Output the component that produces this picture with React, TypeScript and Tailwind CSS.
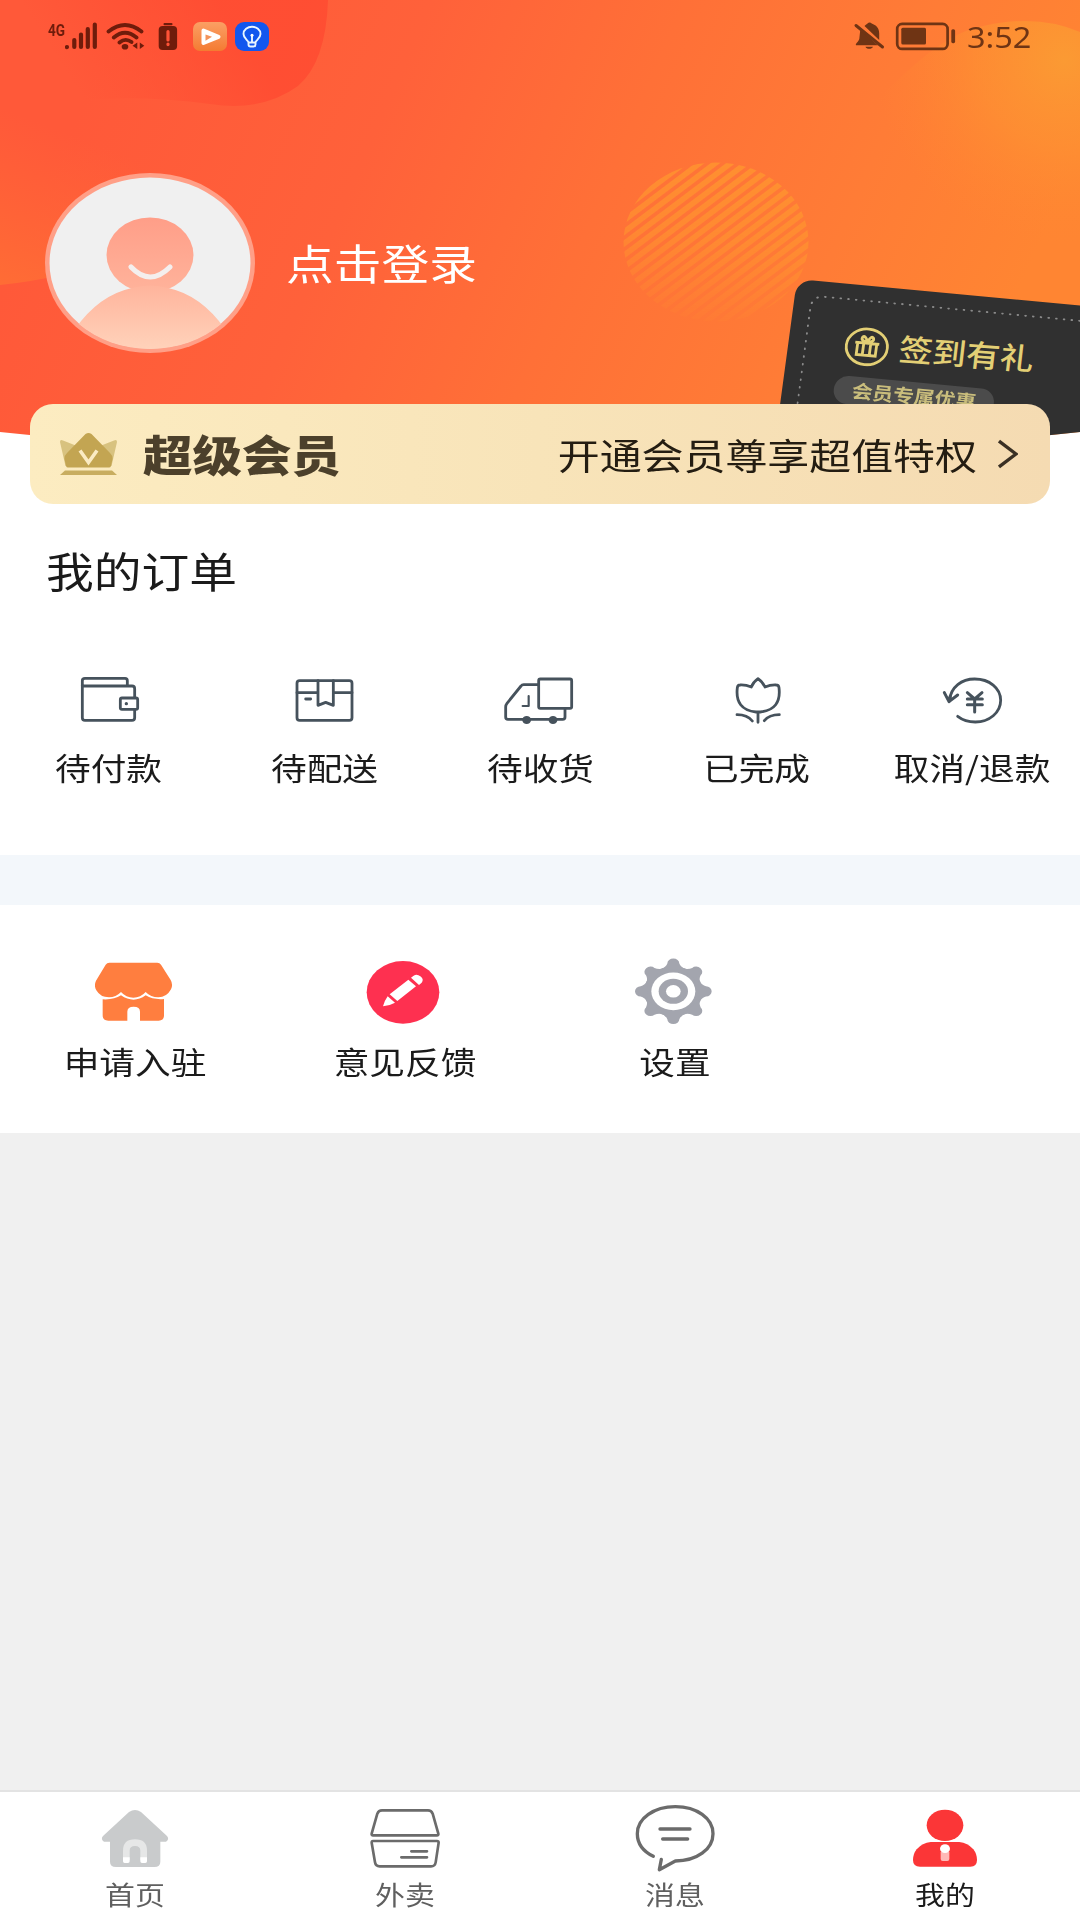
import React from 'react';

type IconItem = { id: string; label: string; icon: React.ReactNode };

const INK = '#46525c';

/* ---------- status bar ---------- */

function StatusLeft() {
  return (
    <div className="flex items-start h-[34px] text-[#6f1c0b]">
      <span className="block w-[17px] mt-px text-[17px] leading-[17px] font-bold font-[Roboto,sans-serif] origin-left scale-x-[0.8] whitespace-nowrap">4G</span>
      <svg className="w-[32px] h-[30px]" viewBox="65 21 32 30" fill="none" stroke="currentColor" strokeWidth="4.2" strokeLinecap="round">
        <path d="M67 47v.1M74.3 40v7M81 34.5v12.5M87.8 29v18M94.8 24.5v22.5" />
      </svg>
      <svg className="w-[40px] h-[30px] ml-[8px]" viewBox="105 21 40 30" fill="none" stroke="currentColor" strokeWidth="3.8" strokeLinecap="round">
        <path d="M108.500 31.500Q125 18.500 141.500 31.500M113.800 37.500Q125 28 136.500 37.500M119.500 42.500Q125.500 37.500 131.500 42" />
        <ellipse cx="125" cy="46.700" rx="3.300" ry="2.800" fill="currentColor" stroke="none" />
        <path d="M137.300 42.500v6.500L132.500 45.700zM139.800 42.500v6.500l4.500-3.300z" fill="currentColor" stroke="none" />
      </svg>
      <svg className="w-[20px] h-[30px] ml-[13px]" viewBox="158 21 20 30">
        <rect x="163.500" y="23" width="9" height="2.200" rx="1" fill="currentColor" />
        <rect x="158.700" y="26" width="18.400" height="24" rx="4" fill="currentColor" />
        <path d="M168 31.500v8.500M168 44v.6" stroke="#ff5337" strokeWidth="3.200" strokeLinecap="round" />
      </svg>
      <div className="w-[34px] h-[29px] ml-[15px] mt-px rounded-[7px] bg-gradient-to-b from-[#fb9f63] to-[#f47b31]">
        <svg className="w-[34px] h-[29px]" viewBox="0 0 34 29" fill="none" stroke="#fff" strokeLinejoin="round">
          <path d="M10.500 8.500l15 6.300-15 6.200z" fill="#fff" strokeWidth="4" />
          <path d="M12.500 12.500l6.500 2.300-6.500 4z" fill="#f4935a" stroke="none" />
        </svg>
      </div>
      <div className="w-[34px] h-[29px] ml-[8px] mt-px rounded-[9px] bg-[#1257ee]">
        <svg className="w-[34px] h-[29px]" viewBox="0 0 34 29" fill="none" stroke="#e9f6ff" strokeWidth="1.900" strokeLinecap="round">
          <path d="M13.500 20.500c-.3-2.200-5-4-5-8.500 0-4.300 4-7.200 8.500-7.200s8.500 2.900 8.500 7.200c0 4.500-4.700 6.300-5 8.500zM13.500 20.500v2q0 2 2 2h3q2 0 2-2v-2M17 13v6.500" />
          <circle cx="17" cy="13.300" r="1.500" fill="#fff" stroke="none" />
        </svg>
      </div>
    </div>
  );
}

function StatusRight() {
  return (
    <div className="flex items-start h-[34px] text-[#6f3414]">
      <svg className="w-[32px] h-[30px]" viewBox="853 21 32 30" fill="currentColor">
        <path d="M864.500 26c1-1.500 2.500-2 3-2.600 1.200-1.300 3-1.300 4.200 0 4.300 1.500 7.500 4.500 7.500 10v6.500zM860.300 29.500l17.500 15.800H856c-1-1.800 2.800-3.400 3.300-6.500zM865.500 46.800h7.400c-.8 2.700-6.600 2.700-7.400 0z" />
        <path d="M856 25.500l26.500 21.500" stroke="currentColor" strokeWidth="3" strokeLinecap="round" />
      </svg>
      <svg className="w-[62px] h-[30px] ml-[10px]" viewBox="895 21 62 30">
        <rect x="897.200" y="23.900" width="50.400" height="25" rx="5" fill="none" stroke="currentColor" strokeWidth="2.700" />
        <rect x="901.300" y="27.800" width="24.700" height="16.800" rx="1.500" fill="currentColor" />
        <rect x="951.300" y="29.200" width="3.800" height="14" rx="1.600" fill="currentColor" />
      </svg>
      <span className="block w-[64px] ml-[10px] text-[29px] leading-[32px] font-['Noto_Sans',sans-serif] origin-left scale-x-[1.12] whitespace-nowrap">3:52</span>
    </div>
  );
}

/* ---------- header ---------- */

function HeaderBackdrop() {
  return (
    <svg className="absolute inset-0 w-[1080px] h-[461px]" viewBox="0 0 1080 461">
      <defs>
        <linearGradient id="sky" gradientUnits="userSpaceOnUse" x1="100" y1="60" x2="960" y2="430">
          <stop offset="0" stopColor="#ff5939" />
          <stop offset="0.3" stopColor="#ff613a" />
          <stop offset="0.55" stopColor="#ff7037" />
          <stop offset="0.8" stopColor="#ff7c36" />
          <stop offset="1" stopColor="#ff8532" />
        </linearGradient>
        <linearGradient id="blobFade" gradientUnits="userSpaceOnUse" x1="230" y1="20" x2="90" y2="110">
          <stop offset="0" stopColor="#ff4a31" />
          <stop offset="1" stopColor="#ff4a31" stopOpacity="0" />
        </linearGradient>
        <linearGradient id="wave" gradientUnits="userSpaceOnUse" x1="0" y1="286" x2="60" y2="130">
          <stop offset="0" stopColor="#ff7034" stopOpacity="0.85" />
          <stop offset="1" stopColor="#ff6a36" stopOpacity="0" />
        </linearGradient>
        <radialGradient id="sun" gradientUnits="userSpaceOnUse" cx="1065" cy="60" r="190">
          <stop offset="0" stopColor="#fb9a33" />
          <stop offset="0.45" stopColor="#fd9432" stopOpacity="0.6" />
          <stop offset="1" stopColor="#ff8531" stopOpacity="0" />
        </radialGradient>
        <linearGradient id="discFade" x1="0.6" y1="0" x2="0.45" y2="1">
          <stop offset="0" stopColor="#fff" />
          <stop offset="0.5" stopColor="#fff" stopOpacity="0.75" />
          <stop offset="1" stopColor="#fff" stopOpacity="0.1" />
        </linearGradient>
        <mask id="disc">
          <ellipse cx="716" cy="242" rx="92.500" ry="79.500" fill="url(#discFade)" />
        </mask>
        <pattern id="stripes" width="20" height="9.300" patternUnits="userSpaceOnUse" patternTransform="rotate(-37)">
          <rect width="20" height="5.600" fill="#ff962f" />
        </pattern>
      </defs>
      <rect width="1080" height="461" fill="url(#sky)" />
      <path d="M0 0H328Q326 62 298 86Q262 112 210 104Q110 90 0 110Z" fill="url(#blobFade)" opacity="0.8" />
      <path d="M0 60V285Q70 278 140 250V60Z" fill="url(#wave)" />
      <path d="M860 120Q930 40 975 28Q1035 12 1080 32V330H860Z" fill="url(#sun)" />
      <rect x="620" y="160" width="192" height="164" fill="url(#stripes)" mask="url(#disc)" opacity="0.8" />
    </svg>
  );
}

function Avatar() {
  return (
    <svg className="w-[210px] h-[180px] shrink-0" viewBox="0 0 210 180">
      <defs>
        <linearGradient id="skin" x1="0" y1="0" x2="0" y2="1">
          <stop offset="0" stopColor="#ff9e88" />
          <stop offset="1" stopColor="#ffb39b" />
        </linearGradient>
        <linearGradient id="shirt" gradientUnits="userSpaceOnUse" x1="0" y1="110" x2="0" y2="176">
          <stop offset="0" stopColor="#ffb39b" />
          <stop offset="1" stopColor="#ffd2ba" />
        </linearGradient>
        <clipPath id="face">
          <ellipse cx="105" cy="90" rx="101" ry="86" />
        </clipPath>
      </defs>
      <ellipse cx="105" cy="90" rx="105" ry="90" fill="#ff9f87" />
      <ellipse cx="105" cy="90" rx="100.500" ry="85.500" fill="#f0f0f0" />
      <g clipPath="url(#face)">
        <ellipse cx="105" cy="82" rx="43.500" ry="37.500" fill="url(#skin)" />
        <path d="M30 156Q54 122 87 115Q105 110 123 115Q156 122 180 156V180H30Z" fill="url(#shirt)" />
      </g>
      <path d="M86 94Q105 114 125 94" fill="none" stroke="#f4efee" strokeWidth="5.200" strokeLinecap="round" />
    </svg>
  );
}

function CheckInCard() {
  return (
    <div className="absolute left-[797px] top-[279px] w-[320px] h-[190px] rounded-[16px] bg-[#303030] pt-[40px] pl-[51px] origin-top-left [transform:matrix(1,0.094,-0.135,1,0,0)]">
      <svg className="absolute left-[16px] top-[14px] w-[300px] h-[170px]" viewBox="0 0 300 170" fill="none">
        <path d="M1 170V14Q1 1 14 1H300" stroke="#8a8a8a" strokeWidth="2" strokeLinecap="round" strokeDasharray="0.5 7.200" />
      </svg>
      <div className="flex items-center h-[40px] pl-[5px] text-[#e3cf75]">
        <svg className="w-[44px] h-[39px]" viewBox="0 0 44 39" fill="none" stroke="currentColor" strokeWidth="2.800">
          <ellipse cx="22" cy="19.500" rx="20.500" ry="17.800" />
          <path d="M10 16h24M12.500 16v12h19V16M18.500 16v12M25.500 16v12M22 15q-7-1-5.500-4.500Q19 7.500 22 14.500Q25 7.500 27.500 10.500Q29 14 22 15" />
        </svg>
        <span className="ml-[10px] -mt-[5px] text-[30px] leading-[40px] font-medium whitespace-nowrap origin-left scale-x-[1.12] -rotate-1">签到有礼</span>
      </div>
      <div className="w-[160px] h-[28px] mt-[11px] rounded-[14px] bg-[#4b4b4b] text-[#c9bd7c] pl-[18px]">
        <span className="block text-[18.500px] leading-[26px] font-bold whitespace-nowrap origin-left scale-x-[1.12]">会员专属优惠</span>
      </div>
    </div>
  );
}

function Crown() {
  return (
    <svg className="w-[57px] h-[42px]" viewBox="0 0 57 42">
      <path d="M0 9Q0 6 3 7.500L17 13L28 20L40 13L54 7.500Q57 6 57 9L51.500 33H5.500Z" fill="#d8c27f" />
      <path d="M25.500 1Q28.500-1 31.500 1L50 20Q53 23 52.500 26L51 33Q50.500 34.500 49 34.500H8Q6.500 34.500 6 33L4.500 26Q4 23 7 20Z" fill="#c3a552" />
      <path d="M5 37.500h47l5 4.500H0z" fill="#c8ad60" />
      <path d="M20 17.500l8.500 12 8.500-12" fill="none" stroke="#fbebc3" strokeWidth="3.600" />
    </svg>
  );
}

/* ---------- grid icons ---------- */

const lineProps = { fill: 'none', stroke: INK, strokeWidth: 8.4, strokeLinecap: 'round', strokeLinejoin: 'round' } as const;

const orders: IconItem[] = [
  {
    id: 'pay',
    label: '待付款',
    icon: (
      <svg className="w-[80px] h-[60px]" viewBox="84 60 240 180" {...lineProps}>
        <path d="M127 108V92q0-7 8-7H255q7 0 7 7v14" />
        <path d="M127 106v97q0 8 8 8H276q8 0 8-8V180M284 143V116q0-8-8-8H127" />
        <rect x="241" y="144" width="52" height="34" rx="5" />
        <circle cx="259" cy="161" r="3" fill={INK} strokeWidth="4" />
      </svg>
    ),
  },
  {
    id: 'deliver',
    label: '待配送',
    icon: (
      <svg className="w-[80px] h-[60px]" viewBox="732 60 240 180" {...lineProps}>
        <rect x="771" y="92" width="165" height="119" rx="8" />
        <path d="M771 128h63M880 128h56M834 92v74l23-9 23 9V92M797 147h15" />
      </svg>
    ),
  },
  {
    id: 'receive',
    label: '待收货',
    icon: (
      <svg className="w-[80px] h-[60px]" viewBox="120 60 240 180" {...lineProps}>
        <path d="M234 104h-43q-5 0-8 4l-42 52q-4 5-4 11v30q0 7 7 7H308q7 0 7-7V178" />
        <rect x="236" y="87" width="99" height="88" rx="5" />
        <path d="M206 138v30h-18" strokeWidth="6.500" />
        <ellipse cx="200" cy="210" rx="9" ry="8" fill={INK} />
        <ellipse cx="279" cy="210" rx="9" ry="8" fill={INK} />
      </svg>
    ),
  },
  {
    id: 'done',
    label: '已完成',
    icon: (
      <svg className="w-[80px] h-[60px]" viewBox="768 60 240 180" {...lineProps}>
        <path d="M894 86q-14 10-20 25q-17-7-34-6q-7 0-8 8q-8 66 56 73h13q64-7 56-73q-1-8-8-8q-17-1-34 6q-7-15-21-25zM894 186v31M831 194q31 0 46 19M958 194q-30 0-45 18" />
      </svg>
    ),
  },
  {
    id: 'refund',
    label: '取消/退款',
    icon: (
      <svg className="w-[80px] h-[60px]" viewBox="396 60 240 180" {...lineProps}>
        <path d="M448 153C452 110 486 87 524 87C568 87 602 114 602 151C602 188 568 216 526 216Q495 216 473 199" />
        <path d="M433 128l14 27 26-20M448 153l3-14" strokeWidth="9" />
        <path d="M502 128l22 19 22-19M502 147h45M502 164h45M524 147v39" strokeWidth="9" />
      </svg>
    ),
  },
];

const TEETH = [0, 45, 90, 135, 180, 225, 270, 315];

const services: IconItem[] = [
  {
    id: 'join',
    label: '申请入驻',
    icon: (
      <svg className="w-[80px] h-[68px]" viewBox="165 78 240 204" fill="#ff7e3f">
        <path d="M208 98H352q7 0 11 6l29 46q8 14 1 28-13 24-38 24-23 0-38-16-15 17-37 17t-37-17q-15 16-36 16-26 0-38-21-8-14-1-29l29-48q4-6 11-6z" />
        <path d="M188 208q34 2 55-12 38 26 74 0 23 14 55 11V256q0 16-16 16H300V245q0-15-19-15t-19 15v27H205q-17 0-17-16z" />
      </svg>
    ),
  },
  {
    id: 'feedback',
    label: '意见反馈',
    icon: (
      <svg className="w-[80px] h-[68px]" viewBox="975 78 240 204" fill="#fff">
        <ellipse cx="1089" cy="187" rx="109" ry="94" fill="#fe3050" />
        <path d="M1105 149l23 20-56 44-23-20zM1043 199l22 19q-16 9-36 11 4-16 14-30zM1113 143l8-6q10-6 20 2 12 9 4 19l-8 7z" />
      </svg>
    ),
  },
  {
    id: 'settings',
    label: '设置',
    icon: (
      <svg className="w-[80px] h-[68px] overflow-visible" viewBox="165 78 240 204">
        <g transform="translate(280 184) scale(1 0.855)" fill="#a3a5ae">
          <circle r="88" />
          {TEETH.map((deg) => (
            <path key={deg} transform={`rotate(${deg})`} d="M-38-76Q-22-86-18-98A18 17 0 0 1 18-98Q22-86 38-76Z" />
          ))}
          <circle r="66" fill="#fff" />
          <circle r="44" />
          <circle r="22" fill="#fff" />
        </g>
      </svg>
    ),
  },
];

const tabs: IconItem[] = [
  {
    id: 'home',
    label: '首页',
    icon: (
      <svg className="w-[80px] h-[72px]" viewBox="105 60 240 216" fill="#c9cbcc">
        <path d="M207 96q18-12 36 0l78 72q8 10-3 17H301v60q0 16-18 16H168q-18 0-18-16V185H132q-11-7-3-17z" />
        <path d="M199 240V212q0-24 26-24t26 24v28" fill="none" stroke="#e6e7e7" strokeWidth="20" />
        <path d="M189 232h20v12q0 5-5 5h-10q-5 0-5-5zM241 232h20v12q0 5-5 5h-10q-5 0-5-5z" fill="#fff" />
      </svg>
    ),
  },
  {
    id: 'takeaway',
    label: '外卖',
    icon: (
      <svg className="w-[80px] h-[72px]" viewBox="915 60 240 216" fill="none" stroke="#6b6b6b" strokeWidth="8" strokeLinecap="round" strokeLinejoin="round">
        <path d="M966 91h138q10 0 14 10l17 60q1 5-4 5H939q-5 0-4-5l17-60q4-10 14-10zM939 183h192q5 0 5 5l-9 59q-2 12-14 12H959q-12 0-14-12l-10-59q0-5 4-5zM1054 214h47M1024 232h77" />
      </svg>
    ),
  },
  {
    id: 'message',
    label: '消息',
    icon: (
      <svg className="w-[80px] h-[72px]" viewBox="165 60 240 216" fill="none" stroke="#6b6b6b" strokeWidth="10" strokeLinecap="round" strokeLinejoin="round">
        <path d="M220 229C190 214 172 191 172 161C172 115 222 80 286 80C350 80 399 115 399 161C399 208 350 243 286 243L238 269L244 238M240 147h90M248 177h75" />
      </svg>
    ),
  },
  {
    id: 'mine',
    label: '我的',
    icon: (
      <svg className="w-[80px] h-[72px]" viewBox="975 60 240 216" fill="#fb3637">
        <ellipse cx="1095" cy="136" rx="55" ry="47" />
        <path d="M1052 186h86q25 2 42 22 11 14 11 32 0 20-20 20H1020q-21 0-21-20 0-18 11-32 17-20 42-22z" />
        <path d="M1082 215h26v22q0 6-6 6h-14q-6 0-6-6z" fill="#ffb9b7" />
        <ellipse cx="1095" cy="206" rx="15" ry="13" fill="#fff" />
      </svg>
    ),
  },
];

function GridItem({ item }: { item: IconItem }) {
  return (
    <button className="flex flex-col items-center">
      {item.icon}
      <span className="mt-[17px] text-[31px] leading-[40px] text-[#1b1b1b] whitespace-nowrap scale-x-[1.15]">{item.label}</span>
    </button>
  );
}

export default function App() {
  const activeTab = 'mine';

  return (
    <div className="w-[1080px] h-[1920px] flex flex-col overflow-hidden bg-[#f0f0f0] font-['Noto_Sans_CJK_SC',sans-serif]">
      {/* white shows below the curved edge */}
      <div className="h-[461px] shrink-0 bg-white">
        <header className="relative h-[461px] overflow-hidden [clip-path:path('M0_0H1080V432Q540_490_0_432Z')]">
          <HeaderBackdrop />
          <CheckInCard />
          <div className="relative flex justify-between pt-[21px] pl-[48px] pr-[49px]">
            <StatusLeft />
            <StatusRight />
          </div>
          <div className="relative flex items-center pl-[45px] mt-[118px]">
            <Avatar />
            <span className="ml-[31px] -mt-[2px] text-[41.500px] leading-[52px] text-white whitespace-nowrap origin-left scale-x-[1.15]">点击登录</span>
          </div>
        </header>
      </div>

      <section className="h-[394px] shrink-0 bg-white">
        {/* membership strip sits over the curved header edge */}
        <div className="relative h-[100px] mx-[30px] -mt-[57px] rounded-[23px] bg-gradient-to-r from-[#fcecc1] via-[#f8e4b9] to-[#f5dbb2] flex items-center pl-[30px] pr-[32px]">
          <Crown />
          <span className="ml-[26px] -mt-[3px] text-[43px] leading-[56px] font-black text-[#4c402b] whitespace-nowrap origin-left scale-x-[1.15]">超级会员</span>
          <div className="ml-auto flex items-center">
            <span className="-mt-px text-[36.300px] leading-[50px] text-[#241d12] whitespace-nowrap origin-right scale-x-[1.155]">开通会员尊享超值特权</span>
            <svg className="w-[20px] h-[32px] ml-[21px] -mt-px" viewBox="0 0 20 32" fill="none" stroke="#3a3024" strokeWidth="3.4">
              <path d="M1 3l17 13L1 29" />
            </svg>
          </div>
        </div>

        <h2 className="mt-[40px] pl-[46px] text-[41.500px] leading-[52px] text-[#1b1b1b] whitespace-nowrap">
          <span className="inline-block origin-left scale-x-[1.15]">我的订单</span>
        </h2>
        <div className="mt-[74px] grid grid-cols-5">
          {orders.map((item) => (
            <GridItem key={item.id} item={item} />
          ))}
        </div>
      </section>

      <div className="h-[50px] shrink-0 bg-[#f3f7fb]" />

      <section className="h-[228px] shrink-0 bg-white pt-[51px] grid grid-cols-4 content-start">
        {services.map((item) => (
          <GridItem key={item.id} item={item} />
        ))}
      </section>

      <nav className="mt-auto h-[130px] shrink-0 border-t-2 border-[#e3e3e3] bg-white pt-[8px] grid grid-cols-4 content-start">
        {tabs.map((item) => (
          <button key={item.id} className="flex flex-col items-center">
            {item.icon}
            <span className={`mt-[5px] text-[26px] leading-[34px] whitespace-nowrap scale-x-[1.15] ${item.id === activeTab ? 'text-[#1b1b1b]' : 'text-[#5f5f5f]'}`}>{item.label}</span>
          </button>
        ))}
      </nav>
    </div>
  );
}
